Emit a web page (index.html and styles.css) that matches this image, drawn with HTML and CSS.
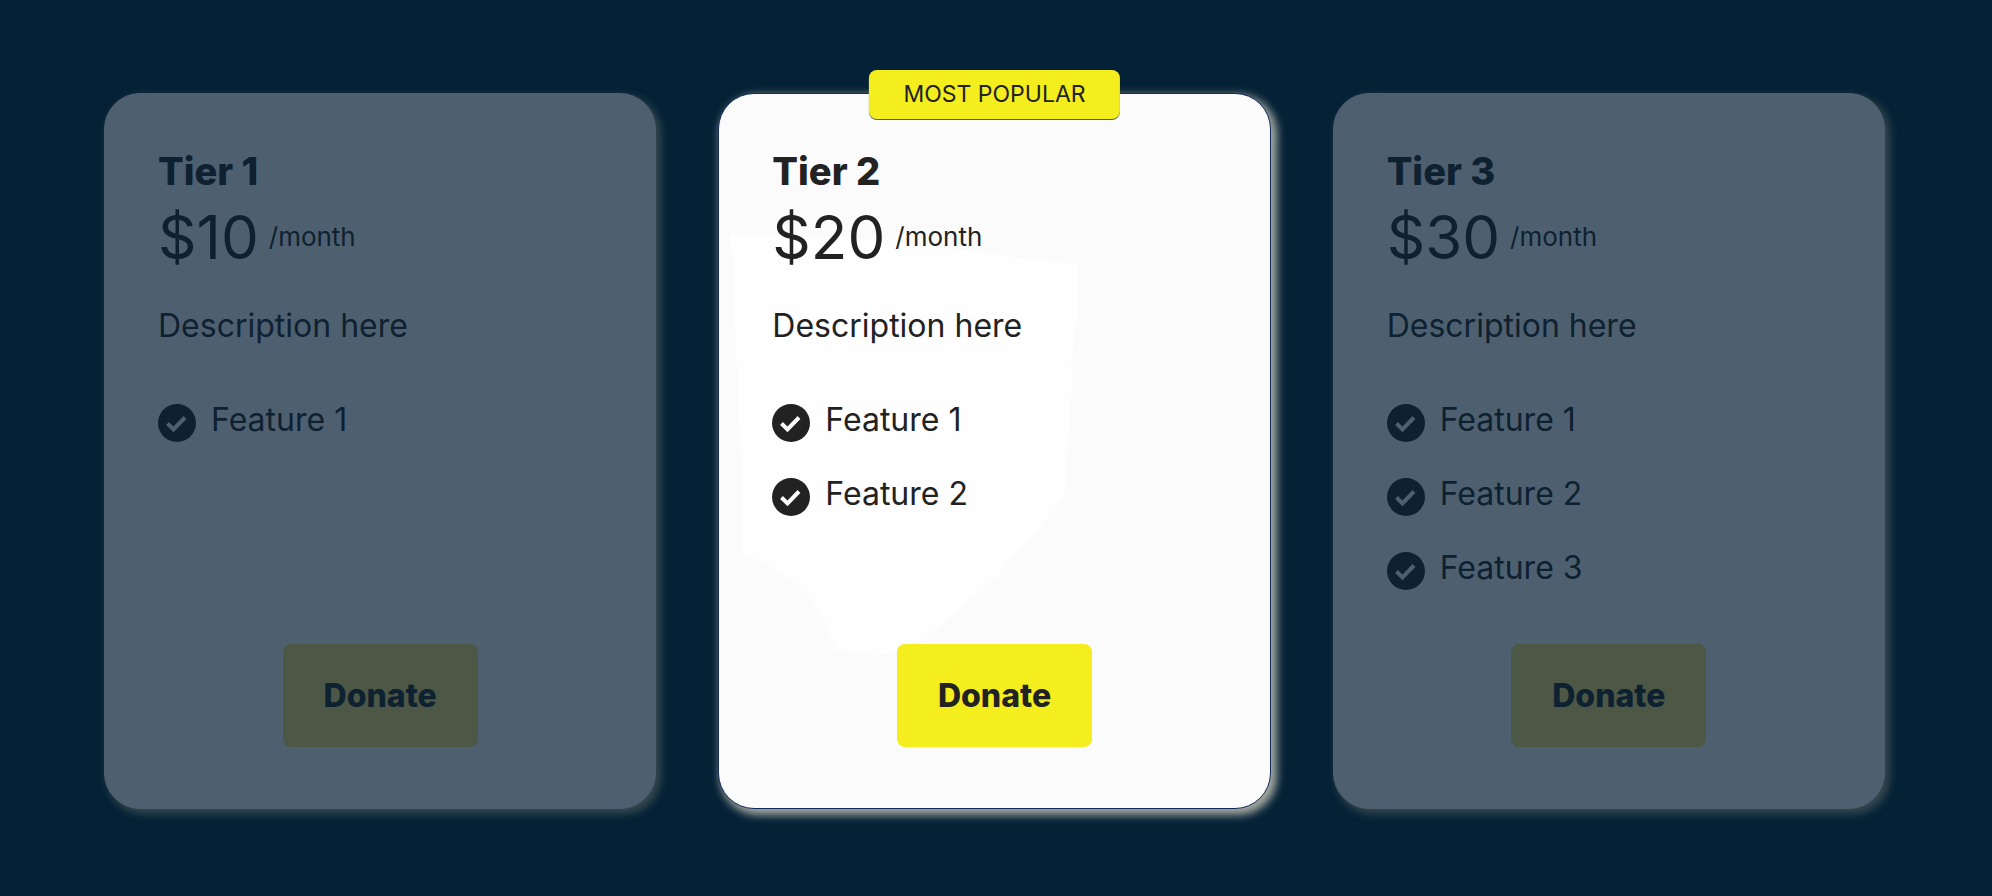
FILE: index.html
```html
<!DOCTYPE html>
<html lang="en">
<head>
<meta charset="utf-8">
<meta name="viewport" content="width=device-width, initial-scale=1">
<title>Donation tiers</title>
<link rel="stylesheet" href="styles.css">
</head>
<body>
<svg class="sprite" aria-hidden="true">
  <symbol id="check" viewBox="0 0 38 38">
    <circle class="check-disc" cx="19" cy="19" r="19"/>
    <path class="check-mark" d="M9.500 19.500L15.500 25.500L27 13.500"/>
  </symbol>
</svg>
<main class="tiers">
  <section class="card">
    <h2 class="title">Tier 1</h2>
    <p class="price"><span class="amount">$10</span><span class="period">/month</span></p>
    <p class="description">Description here</p>
    <ul class="features">
      <li class="feature"><svg class="icon" aria-hidden="true"><use href="#check"/></svg>Feature 1</li>
    </ul>
    <button class="donate" type="button">Donate</button>
  </section>
  <section class="card featured">
    <svg class="sheen" viewBox="0 0 551 715" preserveAspectRatio="none" aria-hidden="true">
      <path d="M11 141L160 146L280 161L360 171L359 216L353 266L354 291L349 356L346 401L321 436L291 466L281 481L241 516L206 546Q170 566 146 561L116 557Q100 485 22 461L23 386L19 306L16 226L16 186Z"/>
    </svg>
    <span class="badge">MOST POPULAR</span>
    <h2 class="title">Tier 2</h2>
    <p class="price"><span class="amount">$20</span><span class="period">/month</span></p>
    <p class="description">Description here</p>
    <ul class="features">
      <li class="feature"><svg class="icon" aria-hidden="true"><use href="#check"/></svg>Feature 1</li>
      <li class="feature"><svg class="icon" aria-hidden="true"><use href="#check"/></svg>Feature 2</li>
    </ul>
    <button class="donate" type="button">Donate</button>
  </section>
  <section class="card">
    <h2 class="title">Tier 3</h2>
    <p class="price"><span class="amount">$30</span><span class="period">/month</span></p>
    <p class="description">Description here</p>
    <ul class="features">
      <li class="feature"><svg class="icon" aria-hidden="true"><use href="#check"/></svg>Feature 1</li>
      <li class="feature"><svg class="icon" aria-hidden="true"><use href="#check"/></svg>Feature 2</li>
      <li class="feature"><svg class="icon" aria-hidden="true"><use href="#check"/></svg>Feature 3</li>
    </ul>
    <button class="donate" type="button">Donate</button>
  </section>
</main>
</body>
</html>
```
FILE: styles.css
```css
* {
  box-sizing: border-box;
}

body {
  margin: 0;
  min-height: 100vh;
  background: #042136;
  font-family: Inter, "Open Sans", sans-serif;
}

.sprite {
  position: absolute;
  width: 0;
  height: 0;
}

.tiers {
  display: grid;
  grid-template-columns: repeat(3, 1fr);
  gap: 62px;
  padding: 93px 107px 86px 104px;
}

.card {
  --ink: #0e2131;
  --paper: #4e606f;
  --accent: #4c5746;
  position: relative;
  display: flex;
  flex-direction: column;
  padding: 51px 53px 61px;
  border: 1px solid var(--paper);
  border-radius: 36px;
  background: var(--paper);
  color: var(--ink);
  box-shadow: 4px 4px 8px 1px #36484f;
}

.featured {
  --ink: #222222;
  --paper: #fbfbfb;
  --accent: #f4ee1e;
  border-color: #12295c;
  box-shadow: 4px 4px 8px 2px #a5aaa0;
}

.sheen {
  position: absolute;
  inset: 0;
  width: 100%;
  height: 100%;
  fill: #fefefe;
}

.badge {
  position: absolute;
  top: -24px;
  left: 50%;
  transform: translateX(-50%);
  padding: 0 34px;
  border-radius: 8px;
  background: var(--accent);
  font-size: 23px;
  line-height: 49px;
  white-space: nowrap;
  box-shadow: 0 1px 0 #53605f;
}

.title,
.price,
.description,
.features,
.donate {
  position: relative;
  margin: 0;
}

.title {
  font-size: 38px;
  font-weight: 800;
  line-height: 52px;
}

.price {
  display: flex;
  align-items: center;
  gap: 10px;
  line-height: 80px;
}

.amount {
  font-size: 60px;
}

.period {
  font-size: 26px;
}

.description {
  margin-top: 29px;
  font-size: 32px;
  line-height: 40px;
}

.features {
  display: flex;
  flex-direction: column;
  gap: 30px;
  margin: 52px 0 54px;
  padding: 0;
  list-style: none;
}

.feature {
  display: flex;
  align-items: center;
  gap: 15px;
  font-size: 32px;
  line-height: 40px;
}

.icon {
  width: 38px;
  height: 38px;
  margin-top: 6px;
}

.check-disc {
  fill: var(--ink);
}

.check-mark {
  fill: none;
  stroke: var(--paper);
  stroke-width: 4;
}

.donate {
  align-self: center;
  margin-top: auto;
  padding: 0 41px;
  border: 0;
  border-radius: 8px;
  background: var(--accent);
  color: inherit;
  font-family: inherit;
  font-size: 32px;
  font-weight: 800;
  line-height: 103px;
  cursor: pointer;
}
```
